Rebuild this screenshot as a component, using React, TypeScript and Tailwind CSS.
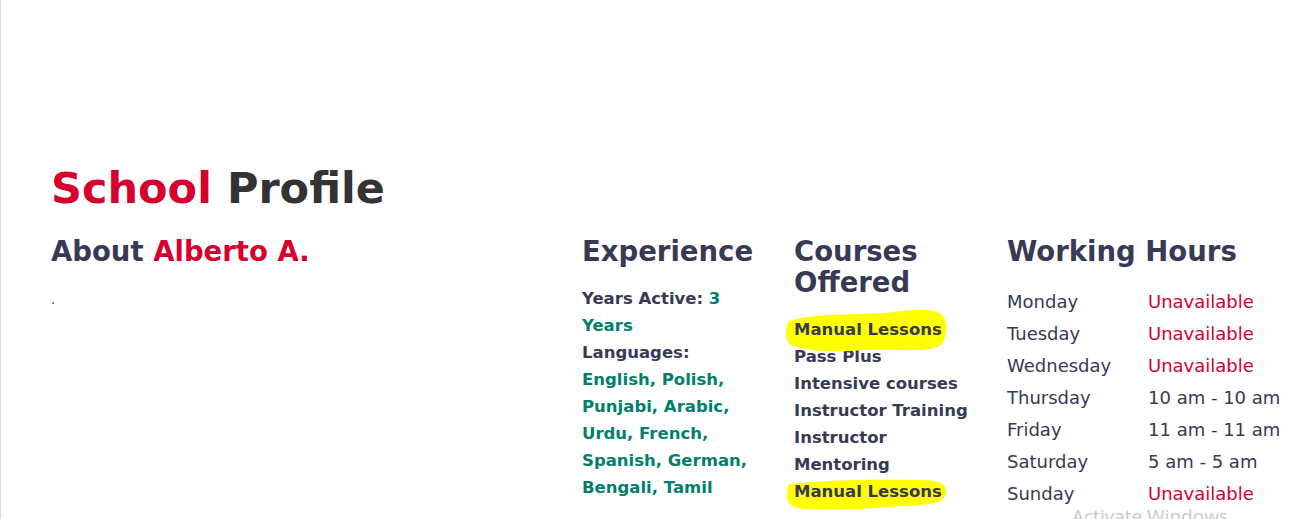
import React from "react";

const Blob1 = () => (
  <svg
    className="absolute -left-[9px] -top-[9px] h-[49px] w-[163px]"
    viewBox="0 0 163 49"
    preserveAspectRatio="none"
  >
    <path
      d="M4 14 C30 6 70 8 100 6 C125 3 148 0 157 8 C164 16 162 30 156 38 C146 46 110 42 80 43 C50 46 20 44 6 38 C-1 32 0 20 4 14 Z"
      fill="#ffff00"
    />
  </svg>
);

const Blob2 = () => (
  <svg
    className="absolute -left-[9px] top-[0px] h-[33px] w-[163px]"
    viewBox="0 0 163 33"
    preserveAspectRatio="none"
  >
    <path
      d="M5 6 C40 2 90 1 130 2 C150 2 160 4 161 12 C162 24 150 27 120 28 C90 30 50 33 20 31 C6 30 1 24 2 16 C2 10 3 7 5 6 Z"
      fill="#ffff00"
    />
  </svg>
);

const hours: [string, string, boolean][] = [
  ["Monday", "Unavailable", true],
  ["Tuesday", "Unavailable", true],
  ["Wednesday", "Unavailable", true],
  ["Thursday", "10 am - 10 am", false],
  ["Friday", "11 am - 11 am", false],
  ["Saturday", "5 am - 5 am", false],
  ["Sunday", "Unavailable", true],
];

export default function App() {
  return (
    <div
      className="relative h-[519px] w-full overflow-hidden border-l border-[#dcdcdc] bg-white text-[#363a55]"
      style={{ fontFamily: "'DejaVu Sans', 'Noto Sans', sans-serif" }}
    >
      <div className="pl-[50px] pt-[162px]">
        <h1 className="text-[43px] font-bold leading-[52px]">
          <span className="text-[#d6002f]">School</span>{" "}
          <span className="text-[#333333]">Profile</span>
        </h1>
        <div className="mt-[22px] flex">
          <div className="w-[531px]">
            <h2 className="text-[27.5px] font-bold leading-[31px]">
              About <span className="text-[#d6002f]">Alberto A.</span>
            </h2>
            <p className="mt-[23px] text-[13px] text-[#333]">.</p>
          </div>
          <div className="w-[212px] pr-[28px]">
            <h2 className="text-[27.5px] font-bold leading-[31px]">Experience</h2>
            <div className="mt-[18px] text-[16.5px] font-bold leading-[27px]">
              <p>
                Years Active: <span className="text-[#00806b]">3 Years</span>
              </p>
              <p>Languages:</p>
              <p className="text-[#00806b]">
                English, Polish, Punjabi, Arabic, Urdu, French, Spanish, German,
                Bengali, Tamil
              </p>
            </div>
          </div>
          <div className="w-[213px] pr-[28px]">
            <h2 className="text-[27.5px] font-bold leading-[31px]">
              Courses
              <br />
              Offered
            </h2>
            <ul className="mt-[18px] text-[16.5px] font-bold leading-[27px]">
              <li>
                <span className="relative inline-block">
                  <Blob1 />
                  <span className="relative">Manual Lessons</span>
                </span>
              </li>
              <li>Pass Plus</li>
              <li>Intensive courses</li>
              <li>Instructor Training</li>
              <li>Instructor Mentoring</li>
              <li>
                <span className="relative inline-block">
                  <Blob2 />
                  <span className="relative">Manual Lessons</span>
                </span>
              </li>
            </ul>
          </div>
          <div className="flex-1">
            <h2 className="text-[27.5px] font-bold leading-[31px]">Working Hours</h2>
            <div className="mt-[19px] text-[18px] leading-[32px]">
              {hours.map(([d, h, red]) => (
                <div key={d} className="flex">
                  <span className="w-[141px]">{d}</span>
                  <span className={red ? "text-[#d6002f]" : ""}>{h}</span>
                </div>
              ))}
            </div>
          </div>
        </div>
      </div>
      <div
        className="absolute left-[1071px] top-[502px] text-[19px] text-[#c9c9c9]"
        style={{ fontFamily: "'Open Sans', sans-serif" }}
      >
        Activate Windows
      </div>
    </div>
  );
}
